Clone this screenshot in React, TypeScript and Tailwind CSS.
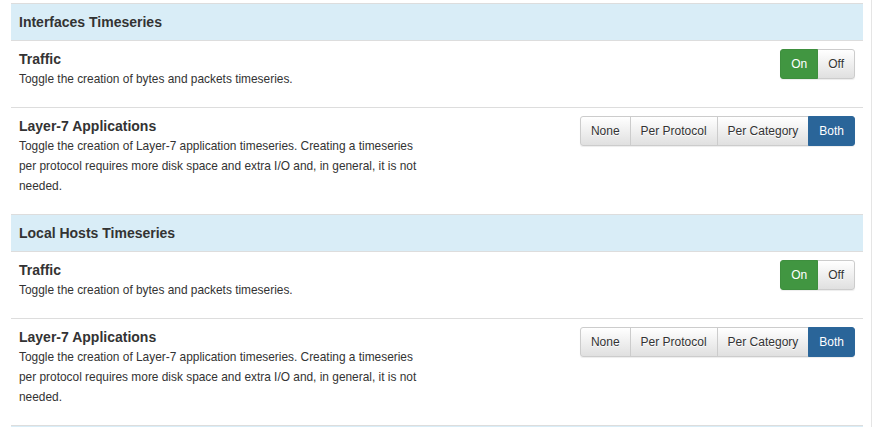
import React from "react";

type Row = {
  title: string;
  description: string;
  options: string[];
  active: string;
  tone: "success" | "primary";
};

type Section = {
  header: string;
  rows: Row[];
};

const layer7 =
  "Toggle the creation of Layer-7 application timeseries. Creating a timeseries per protocol requires more disk space and extra I/O and, in general, it is not needed.";

const sections: Section[] = [
  {
    header: "Interfaces Timeseries",
    rows: [
      {
        title: "Traffic",
        description: "Toggle the creation of bytes and packets timeseries.",
        options: ["On", "Off"],
        active: "On",
        tone: "success",
      },
      {
        title: "Layer-7 Applications",
        description: layer7,
        options: ["None", "Per Protocol", "Per Category", "Both"],
        active: "Both",
        tone: "primary",
      },
    ],
  },
  {
    header: "Local Hosts Timeseries",
    rows: [
      {
        title: "Traffic",
        description: "Toggle the creation of bytes and packets timeseries.",
        options: ["On", "Off"],
        active: "On",
        tone: "success",
      },
      {
        title: "Layer-7 Applications",
        description: layer7,
        options: ["None", "Per Protocol", "Per Category", "Both"],
        active: "Both",
        tone: "primary",
      },
    ],
  },
];

function ButtonGroup({ options, active, tone }: { options: string[]; active: string; tone: Row["tone"] }) {
  return (
    <div className="flex rounded-[3px] shadow-[0_1px_1px_rgba(0,0,0,0.075)]">
      {options.map((opt, i) => {
        const isActive = opt === active;
        const first = i === 0;
        const last = i === options.length - 1;
        let cls =
          "h-[30px] px-[10px] text-[12px] leading-[18px] border -ml-px first:ml-0 ";
        if (isActive) {
          cls +=
            tone === "success"
              ? "bg-[#419641] border-[#3e8f3e] text-white relative z-10 "
              : "bg-[#2a6599] border-[#2b669a] text-white relative z-10 ";
        } else {
          cls +=
            "bg-gradient-to-b from-white to-[#e0e0e0] border-[#cccccc] text-[#333333] [text-shadow:0_1px_0_#fff] ";
        }
        if (first) cls += "rounded-l-[3px] ";
        if (last) cls += "rounded-r-[3px] ";
        return (
          <button key={opt} className={cls}>
            {opt}
          </button>
        );
      })}
    </div>
  );
}

export default function App() {
  return (
    <div
      className="h-[427px] w-[872px] overflow-hidden border-r border-[#e5e5e5] bg-white pl-[11px] pr-[8px] pt-[3px] text-[#333333]"
      style={{ fontFamily: "'Liberation Sans', Arial, sans-serif" }}
    >
      <div className="w-[852px]">
        {sections.map((section) => (
          <div key={section.header}>
            {/* Section header */}
            <div className="border-t border-[#dddddd] bg-[#d9edf7] px-2 py-2 text-[14px] font-bold leading-5">
              {section.header}
            </div>

            {section.rows.map((row, idx) => (
              <div key={idx} className="flex border-t border-[#dddddd] px-2 pt-2 pb-[18px]">
                <div className="w-[406px]">
                  <div className="text-[14px] font-bold leading-5">{row.title}</div>
                  <div className="text-[11.9px] leading-5">{row.description}</div>
                </div>
                <div className="flex flex-1 items-start justify-end">
                  <ButtonGroup options={row.options} active={row.active} tone={row.tone} />
                </div>
              </div>
            ))}
          </div>
        ))}
        {/* Next section, cut off by the viewport */}
        <div className="h-[37px] border-t border-[#dddddd] bg-[#d9edf7]"></div>
      </div>
    </div>
  );
}
